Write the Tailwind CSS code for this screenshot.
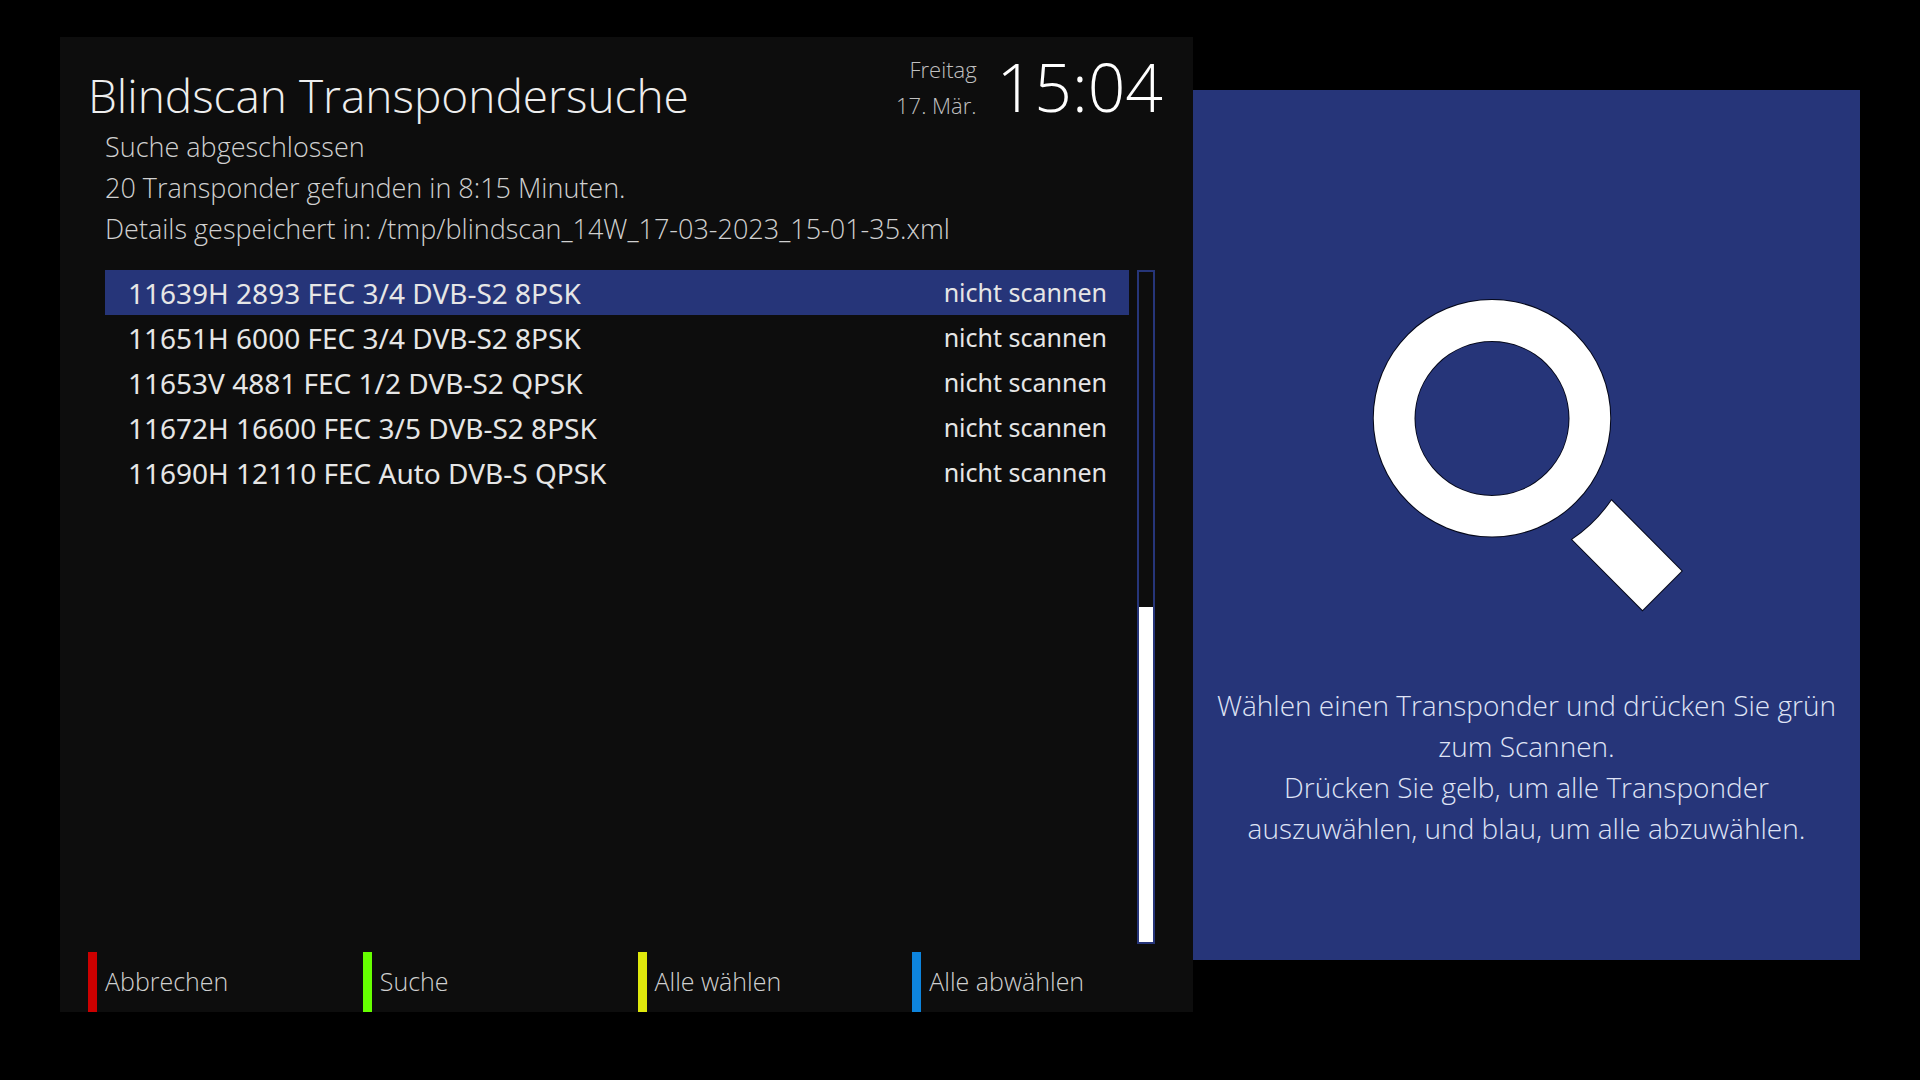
<!DOCTYPE html>
<html lang="de">
<head>
  <meta charset="UTF-8">
  <meta name="viewport" content="width=device-width, initial-scale=1.0">
  <title>Blindscan Transpondersuche</title>
  <script src="https://cdn.jsdelivr.net/npm/@tailwindcss/browser@4"></script>
</head>
<body class="bg-black text-[#d0d0d0] font-['Open_Sans',sans-serif] font-light">

  <div class="min-h-screen grid grid-cols-[1133fr_667fr] px-[60px] pt-[37px] pb-[68px]">

    <!-- Hauptfenster -->
    <main class="bg-[#0d0d0d] flex flex-col pl-7 pr-[30px]">
      <header class="flex justify-between pt-[14px]">
        <h1 class="text-[46px] leading-[60px] pt-[14px] pb-px text-[#eeeeee] whitespace-nowrap">Blindscan Transpondersuche</h1>
        <div class="flex gap-5">
          <div class="text-[22px] leading-9 text-right whitespace-nowrap text-[#c0c0c0]">
            <p>Freitag</p>
            <p>17. Mär.</p>
          </div>
          <time class="text-[66px] leading-[70px] text-white">15:04</time>
        </div>
      </header>

      <div class="pl-[17px] text-[27px] leading-[41px] whitespace-nowrap">
        <p>Suche abgeschlossen</p>
        <p>20 Transponder gefunden in 8:15 Minuten.</p>
        <p>Details gespeichert in: /tmp/blindscan_14W_17-03-2023_15-01-35.xml</p>
      </div>

      <!-- Transponderliste -->
      <div class="flex-1 flex gap-2 pl-[17px] pr-2 pt-[21px]">
        <div class="flex-1">
          <table class="w-full font-['Noto_Sans',sans-serif] font-normal text-[#e6e6e6] text-[28px] whitespace-nowrap">
            <tbody>
              <tr class="h-[45px] bg-[#263579]">
                <td class="pl-[23px]">11639H 2893 FEC 3/4 DVB-S2 8PSK</td>
                <td class="pr-[22px] text-right text-[25px]">nicht scannen</td>
              </tr>
              <tr class="h-[45px]">
                <td class="pl-[23px]">11651H 6000 FEC 3/4 DVB-S2 8PSK</td>
                <td class="pr-[22px] text-right text-[25px]">nicht scannen</td>
              </tr>
              <tr class="h-[45px]">
                <td class="pl-[23px]">11653V 4881 FEC 1/2 DVB-S2 QPSK</td>
                <td class="pr-[22px] text-right text-[25px]">nicht scannen</td>
              </tr>
              <tr class="h-[45px]">
                <td class="pl-[23px]">11672H 16600 FEC 3/5 DVB-S2 8PSK</td>
                <td class="pr-[22px] text-right text-[25px]">nicht scannen</td>
              </tr>
              <tr class="h-[45px]">
                <td class="pl-[23px]">11690H 12110 FEC Auto DVB-S QPSK</td>
                <td class="pr-[22px] text-right text-[25px]">nicht scannen</td>
              </tr>
            </tbody>
          </table>
        </div>
        <div class="w-[18px] border-2 border-[#263579] flex flex-col justify-end">
          <div class="h-1/2 bg-white"></div>
        </div>
      </div>

      <!-- Farbtasten -->
      <footer class="grid grid-cols-4 pt-2 -mr-6 text-[25px] whitespace-nowrap">
        <button class="h-[60px] border-l-[9px] border-[#cc0000] pl-2 text-left">Abbrechen</button>
        <button class="h-[60px] border-l-[9px] border-[#66ff00] pl-2 text-left">Suche</button>
        <button class="h-[60px] border-l-[9px] border-[#dfe80c] pl-2 text-left">Alle wählen</button>
        <button class="h-[60px] border-l-[9px] border-[#0d84dd] pl-2 text-left">Alle abwählen</button>
      </footer>
    </main>

    <!-- Hinweis -->
    <aside class="bg-[#263579] text-[#dfe3f5] mt-[53px] mb-[52px] flex flex-col items-center pt-[208px]">
      <svg class="w-[312px] h-[316px] ml-[2px]" viewBox="1372 298 312 316" fill="#fff" stroke="#05081a" stroke-width="2" paint-order="stroke">
        <path fill-rule="evenodd" d="M1492 300a118 118 0 1 0 0 236.500a118 118 0 1 0 0-236.500zM1492 341a77.500 77.500 0 1 1 0 155a77.500 77.500 0 1 1 0-155z"/>
        <path d="M1611.500 500.500L1681.500 571L1642.500 610L1572.300 539.500A145 145 0 0 0 1611.500 500.500z"/>
      </svg>
      <p class="pt-[71px] text-[28px] leading-[41px] text-center">
        Wählen einen Transponder und drücken Sie grün<br>
        zum Scannen.<br>
        Drücken Sie gelb, um alle Transponder<br>
        auszuwählen, und blau, um alle abzuwählen.
      </p>
    </aside>

  </div>

</body>
</html>
